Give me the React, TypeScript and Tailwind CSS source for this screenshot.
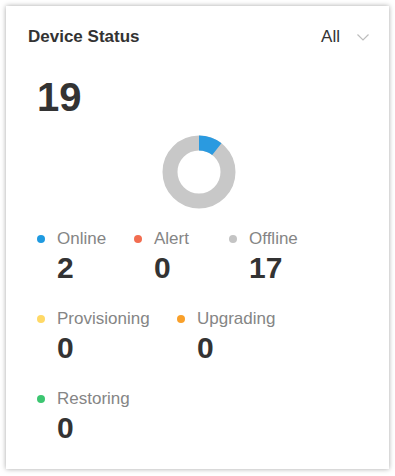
import React from 'react';

const items = [
  [
    { label: 'Online', value: 2, color: 'bg-[#1f9ae0]', w: 'w-[97px]' },
    { label: 'Alert', value: 0, color: 'bg-[#f26d50]', w: 'w-[95px]' },
    { label: 'Offline', value: 17, color: 'bg-[#c4c4c4]', w: 'w-[96px]' },
  ],
  [
    { label: 'Provisioning', value: 0, color: 'bg-[#ffd966]', w: 'w-[140px]' },
    { label: 'Upgrading', value: 0, color: 'bg-[#f9a02a]', w: 'w-[120px]' },
  ],
  [{ label: 'Restoring', value: 0, color: 'bg-[#3cc671]', w: 'w-[120px]' }],
];

function Donut() {
  const r = 29;
  const c = 2 * Math.PI * r;
  const online = (2 / 19) * c;
  return (
    <svg width="74" height="74" viewBox="0 0 74 74">
      <circle cx="37" cy="37" r={r} fill="none" stroke="#c8c8c8" strokeWidth="15" />
      <circle
        cx="37"
        cy="37"
        r={r}
        fill="none"
        stroke="#2a9ae0"
        strokeWidth="15"
        strokeDasharray={`${online} ${c}`}
        transform="rotate(-90 37 37)"
      />
    </svg>
  );
}

export default function App() {
  return (
    <div className="min-h-screen bg-white p-[6px] font-['Liberation_Sans',Arial,sans-serif]">
      <div className="flex h-[463px] w-[383px] flex-col bg-white pt-[19px] shadow-[0_0_5px_rgba(0,0,0,0.35)]">
        {/* Header */}
        <div className="flex h-[24px] items-center justify-between pl-[22px] pr-[20px]">
          <h2 className="text-[17px] font-bold leading-[24px] text-[#333]">Device Status</h2>
          <div className="flex items-center gap-[17px]">
            <span className="text-[17px] leading-[24px] text-[#333]">All</span>
            <svg width="12" height="7" viewBox="0 0 12 7">
              <polyline points="0.5,0.5 6,6 11.5,0.5" fill="none" stroke="#bdbdbd" strokeWidth="1.2" />
            </svg>
          </div>
        </div>

        {/* Total */}
        <div className="mt-[28px] pl-[31px] text-[40px] font-bold leading-[40px] text-[#333]">19</div>

        {/* Chart */}
        <div className="mt-[18px] pl-[156px]">
          <Donut />
        </div>

        {/* Legend */}
        <div className="mt-[20px] flex flex-col gap-[26px] pl-[31px]">
          {items.map((row, i) => (
            <div key={i} className="flex">
              {row.map((it) => (
                <div key={it.label} className={`flex flex-col gap-[4px] ${it.w}`}>
                  <div className="flex h-[20px] items-center gap-[12px]">
                    <span className={`h-[8px] w-[8px] rounded-full ${it.color}`} />
                    <span className="text-[17px] leading-[20px] text-[#858585]">{it.label}</span>
                  </div>
                  <div className="pl-[20px] text-[30px] font-bold leading-[30px] text-[#333]">{it.value}</div>
                </div>
              ))}
            </div>
          ))}
        </div>
      </div>
    </div>
  );
}
